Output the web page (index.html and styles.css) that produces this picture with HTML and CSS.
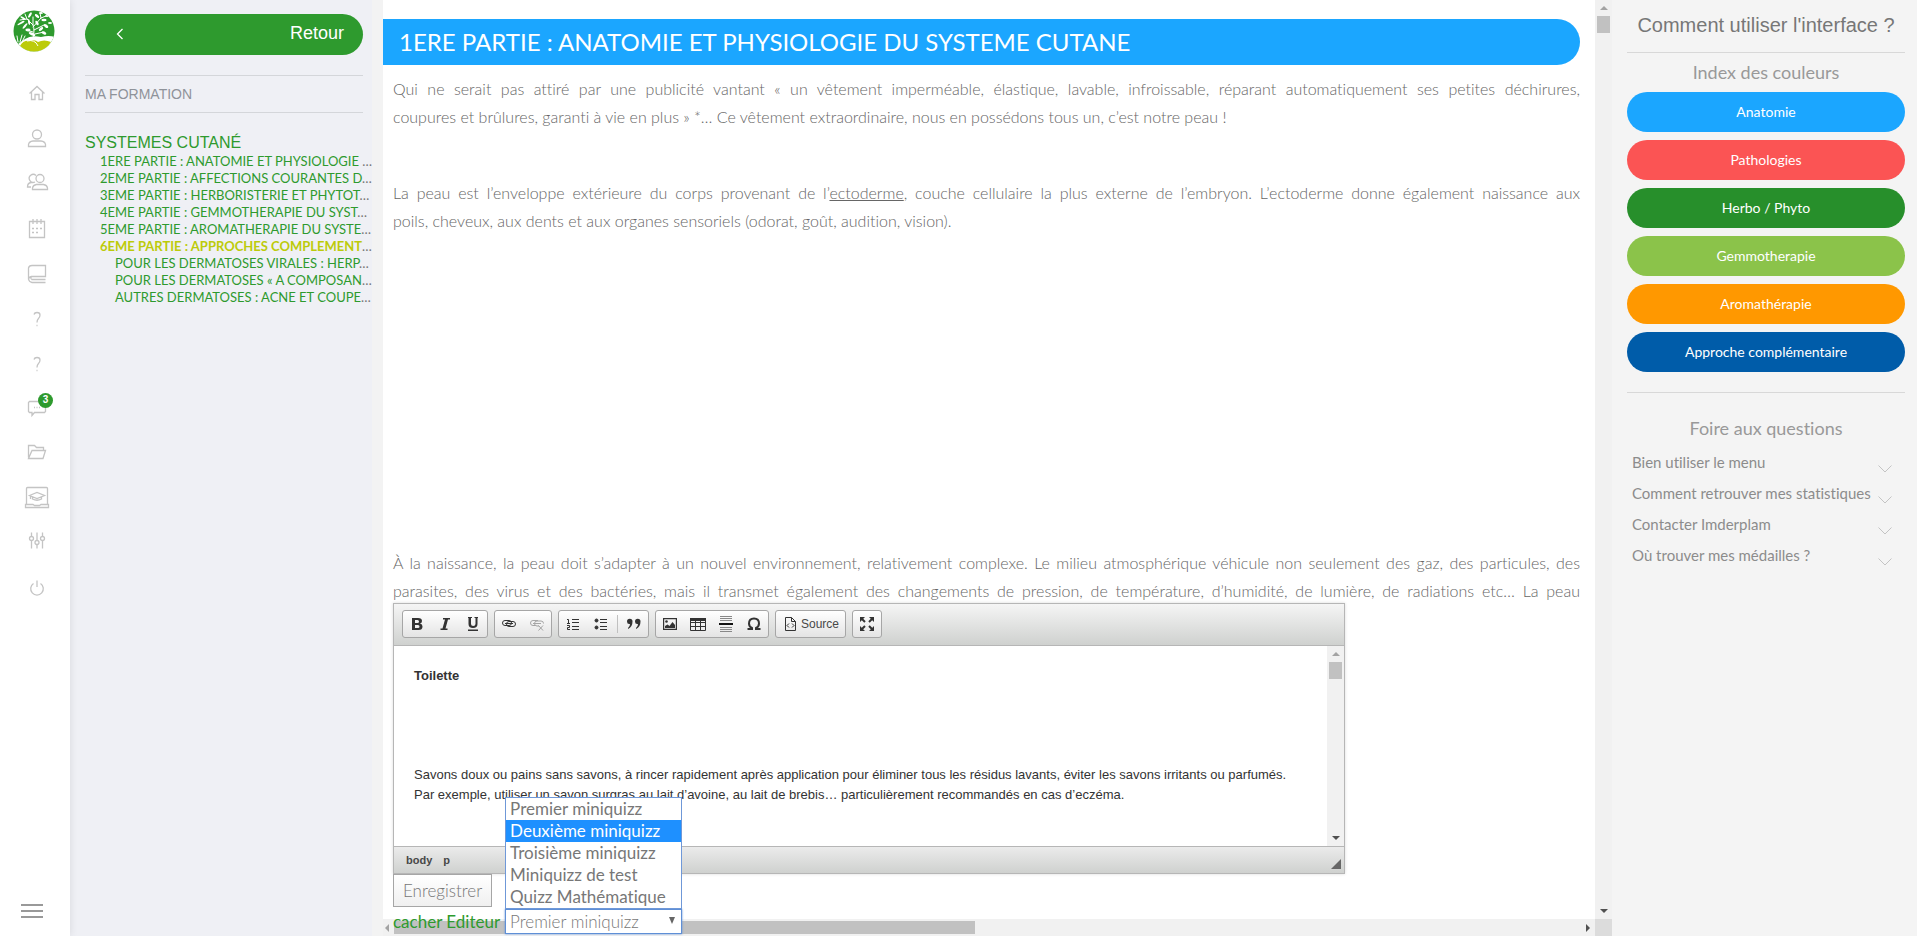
FILE: index.html
```html
<!DOCTYPE html>
<html lang="fr">
<head>
<meta charset="utf-8">
<title>Ma formation – Systèmes cutané</title>
<link rel="stylesheet" href="styles.css">
</head>
<body>
<nav class="rail" aria-label="Navigation principale">
  <a class="logo" href="#" aria-label="Accueil">
    <svg width="42" height="42" viewBox="0 0 42 42">
      <clipPath id="disc"><circle cx="21" cy="21" r="20.5"/></clipPath>
      <g clip-path="url(#disc)">
        <rect width="42" height="42" fill="#2e9a2e"/>
        <path d="M5 34L12 29Q18 25 28 27Q36 25 42 27V42H0Z" fill="#fff"/>
        <path d="M7 36Q10 30 17 31Q22 29 25 32Q31 29 38 32Q33 42 21 42Q12 42 7 36Z" fill="#bccb0a"/>
        <path d="M14 31Q22 29 25 36" stroke="#fff" fill="none"/>
        <g stroke="#fff" fill="none" stroke-width="1" stroke-linecap="round">
          <path d="M20 28Q22 20 20 15L14 9M20 17L28 8M21 20L31 15M20 22L13 20M28 8L27 3M28 8L33 6M14 9L12 4M14 9L7 10M22 24L31 22M20 15L20 7M7 32L9 25M9 32L12 26M5 32L4 26"/>
        </g>
        <g fill="#fff">
          <ellipse cx="24" cy="6" rx="2.600" ry="1.300" transform="rotate(40 24 6)"/><ellipse cx="31" cy="10" rx="2.600" ry="1.300"/><ellipse cx="33" cy="16" rx="2.600" ry="1.400" transform="rotate(35 33 16)"/><ellipse cx="28" cy="19" rx="2.600" ry="1.400" transform="rotate(-40 28 19)"/><ellipse cx="31" cy="23" rx="2.500" ry="1.300" transform="rotate(25 31 23)"/><ellipse cx="24" cy="13" rx="2.500" ry="1.300" transform="rotate(60 24 13)"/><ellipse cx="16" cy="12" rx="3" ry="1" transform="rotate(80 16 12)"/><ellipse cx="10" cy="8" rx="3" ry="1" transform="rotate(30 10 8)"/><ellipse cx="8" cy="13" rx="4" ry="1" transform="rotate(-30 8 13)"/><ellipse cx="12" cy="16" rx="3.500" ry="1" transform="rotate(-50 12 16)"/><ellipse cx="17" cy="5" rx="3" ry="1.200" transform="rotate(-60 17 5)"/><ellipse cx="15" cy="20" rx="2.500" ry="1.400"/><ellipse cx="19" cy="24" rx="3.500" ry="1.400" transform="rotate(25 19 24)"/><ellipse cx="28" cy="3" rx="2" ry="1"/><ellipse cx="34" cy="6" rx="2" ry="1"/><ellipse cx="37" cy="13" rx="2" ry="1"/>
        </g>
      </g>
    </svg>
  </a>
  <ul class="rail-list">
    <li><a href="#" aria-label="Accueil"><svg class="ico" viewBox="0 0 26 26"><path d="M5.500 13.500L13 6.500L20.500 13.500M7.500 12V19.500H11V14.500H15V19.500H18.500V12"/></svg></a></li>
    <li><a href="#" aria-label="Profil"><svg class="ico" viewBox="0 0 26 26"><circle cx="13" cy="9.500" r="4.500"/><path d="M4.500 21.500V19.500Q5 16.500 9 16H17Q21 16.500 21.500 19.500V21.500Z"/></svg></a></li>
    <li><a href="#" aria-label="Groupes"><svg class="ico" viewBox="0 0 26 26"><circle cx="16" cy="8.500" r="4"/><path d="M8.500 19.500V18Q9 15 12.500 14.500H19.500Q23 15 23.500 18V19.500ZM12 5.500A4 4 0 1 0 11 12M10 12.500H7Q3.500 13 3.500 17H7"/></svg></a></li>
    <li><a href="#" aria-label="Agenda"><svg class="ico" viewBox="0 0 26 26"><path d="M5.500 6.500H20.500V22.500H5.500ZM9 4V9M13 4V9M17 4V9"/><path d="M8 13.500H18M8 17.500H15" stroke-dasharray="2 2"/></svg></a></li>
    <li><a href="#" aria-label="Cours"><svg class="ico" viewBox="0 0 26 26"><path d="M8 5.500H21.500V16.500H7.500Q4.500 17 4.500 19.500V8Q5 5.500 8 5.500M4.500 19Q5 22 8 22.500H21.500M7.500 19.500H21.500M7.500 16.500Q6 18.500 8 19.500"/></svg></a></li>
    <li><a href="#" aria-label="Aide"><svg class="ico" viewBox="0 0 26 26"><path d="M10 9.500Q10.500 7.500 13 7.500Q16 7.500 16 10Q16 12 14.500 13.500Q13 15 13 17.500M12.500 20.500H13.500"/></svg></a></li>
    <li><a href="#" aria-label="Quizz"><svg class="ico" viewBox="0 0 26 26"><path d="M10 9.500Q10.500 7.500 13 7.500Q16 7.500 16 10Q16 12 14.500 13.500Q13 15 13 17.500M12.500 20.500H13.500"/></svg></a></li>
    <li><a href="#" aria-label="Messages"><svg class="ico" viewBox="0 0 26 26"><path d="M5.500 6.500H20.500L21.500 7.500V16.500L20.500 17.500H10.500L8 20.500V17.500H5.500L4.500 16.500V7.500Z"/><path d="M10 12.500H17" stroke-dasharray="1 1.500"/></svg><span class="badge">3</span></a></li>
    <li><a href="#" aria-label="Documents"><svg class="ico" viewBox="0 0 26 26"><path d="M4.500 17.500V5.500H10.500L12.500 7.500H19.500V10.500M4.500 18.500L8 10.500H21.500L19 18.500Z"/></svg></a></li>
    <li><a href="#" aria-label="E-learning"><svg class="ico" viewBox="0 0 26 26"><path d="M2.500 19V3.500Q2.500 2.500 3.500 2.500H22.500Q23.500 2.500 23.500 3.500V19M1.500 19.500H9L10.500 20.500H15.500L17 19.500H24.500V22.500H1.500ZM5.500 10.500L13 7.500L20.500 10.500L13 13.500ZM8.500 12V14Q13 16.500 17.500 14V12M6.500 11V14"/></svg></a></li>
    <li><a href="#" aria-label="Réglages"><svg class="ico" viewBox="0 0 26 26"><path d="M7.500 2.500V6.500M7.500 10.500V18.500M13 2.500V10.500M13 14.500V18.500M18.500 2.500V6.500M18.500 10.500V18.500"/><circle cx="7.500" cy="8.500" r="2"/><circle cx="13" cy="12.500" r="2"/><circle cx="18.500" cy="8.500" r="2"/></svg></a></li>
    <li><a href="#" aria-label="Déconnexion"><svg class="ico" viewBox="0 0 26 26"><path d="M9.500 8.500A6.300 6.300 0 1 0 16.500 8.500M13 5.500V12"/></svg></a></li>
  </ul>
  <button class="burger" type="button" aria-label="Menu"><i></i><i></i><i></i></button>
</nav>

<aside class="sidebar">
  <button class="back" type="button">
    <svg width="8" height="12" viewBox="0 0 8 12"><path d="M6.500 1L1.500 6L6.500 11" fill="none" stroke="#fff" stroke-width="1.300"/></svg>
    <span>Retour</span>
  </button>
  <h2 class="side-title">MA FORMATION</h2>
  <h3 class="course"><a href="#">SYSTEMES CUTANÉ</a></h3>
  <ul class="toc">
    <li><a href="#">1ERE PARTIE : ANATOMIE ET PHYSIOLOGIE </a>…</li>
    <li><a href="#">2EME PARTIE : AFFECTIONS COURANTES D</a>…</li>
    <li><a href="#">3EME PARTIE : HERBORISTERIE ET PHYTOT</a>…</li>
    <li><a href="#">4EME PARTIE : GEMMOTHERAPIE DU SYST</a>…</li>
    <li><a href="#">5EME PARTIE : AROMATHERAPIE DU SYSTE</a>…</li>
    <li><a class="current" href="#">6EME PARTIE : APPROCHES COMPLEMENT</a>…</li>
    <li class="sub"><a href="#">POUR LES DERMATOSES VIRALES : HERP</a>…</li>
    <li class="sub"><a href="#">POUR LES DERMATOSES « A COMPOSAN</a>…</li>
    <li class="sub"><a href="#">AUTRES DERMATOSES : ACNE ET COUPE</a>…</li>
  </ul>
</aside>

<main class="main">
  <article class="lesson">
    <h1>1ERE PARTIE : ANATOMIE ET PHYSIOLOGIE DU SYSTEME CUTANE</h1>
    <p><span class="full">Qui ne serait pas attiré par une publicité vantant « un vêtement imperméable, élastique, lavable, infroissable, réparant automatiquement ses petites déchirures, </span>coupures et brûlures, garanti à vie en plus » *… Ce vêtement extraordinaire, nous en possédons tous un, c’est notre peau !</p>
    <p><span class="full">La peau est l’enveloppe extérieure du corps provenant de l’<u>ectoderme</u>, couche cellulaire la plus externe de l’embryon. L’ectoderme donne également naissance aux </span>poils, cheveux, aux dents et aux organes sensoriels (odorat, goût, audition, vision).</p>
    <p class="after-media"><span class="full">À la naissance, la peau doit s’adapter à un nouvel environnement, relativement complexe. Le milieu atmosphérique véhicule non seulement des gaz, des particules, des </span><span class="full">parasites, des virus et des bactéries, mais il transmet également des changements de pression, de température, d’humidité, de lumière, de radiations etc… La peau</span></p>
  </article>
  <div class="vbar"><i class="tri up"></i><i class="vthumb"></i><i class="tri down"></i></div>
  <div class="hbar"><i class="tri left"></i><i class="hthumb"></i><i class="tri right"></i></div>
  <div class="corner"></div>

  <form class="dock">
    <div class="editor">
      <div class="toolbar" role="toolbar">
        <div class="group">
          <button type="button" aria-label="Gras"><svg class="tool" viewBox="0 0 16 16"><path fill-rule="evenodd" d="M3 2H9Q13 2 13 5Q13 7 11 7.600Q13.500 8.200 13.500 10.500Q13.500 14 9.500 14H3ZM6 4V7H8.500Q10 7 10 5.500T8.500 4ZM6 9V12H9Q10.500 12 10.500 10.500T9 9Z"/></svg></button>
          <button type="button" aria-label="Italique"><svg class="tool" viewBox="0 0 16 16"><path d="M6 2H13V3.500H11L8.500 12.500H10.500V14H3.500V12.500H5.500L8 3.500H6Z"/></svg></button>
          <button type="button" aria-label="Souligné"><svg class="tool" viewBox="0 0 16 16"><path d="M3 1H7V2H6V8Q6 10 8.200 10T10.500 8V2H9.500V1H13V2H12.500V8Q12.500 12 8 12T3.500 8V2H3ZM3 13.500H13V15H3Z"/></svg></button>
        </div>
        <div class="group">
          <button type="button" aria-label="Lien"><svg class="tool line" viewBox="0 0 16 16"><rect x="1.500" y="4.500" width="9" height="5" rx="2.500"/><rect x="5.500" y="5.500" width="9" height="5" rx="2.500"/><path d="M4 7.500H12"/></svg></button>
          <button type="button" aria-label="Supprimer le lien" disabled><svg class="tool line" viewBox="0 0 16 16"><path d="M10 10H8Q5.500 10 5.500 7.500T8 5H12Q14.500 5 14.500 7.500M6 9.500H4Q1.500 9.500 1.500 7T4 4.500H9M4 7.500H12M9.500 9.500L14 14.500M14 9.500L9.500 14.500"/></svg></button>
        </div>
        <div class="group">
          <button type="button" aria-label="Liste numérotée"><svg class="tool line" viewBox="0 0 16 16"><path d="M2 3.500H3.500V7M2 7.500H5M2 9.500H4.500V11.500H2.500V13.500H5M7 3.500H14M7 6.500H14M7 10.500H14M7 13.500H14"/></svg></button>
          <button type="button" aria-label="Liste à puces"><svg class="tool line" viewBox="0 0 16 16"><circle cx="3.500" cy="4.500" r="1.500" fill="#333"/><circle cx="3.500" cy="11.500" r="1.500" fill="#333"/><path d="M7 3.500H14M7 6.500H14M7 10.500H14M7 13.500H14"/></svg></button>
          <span class="sep"></span>
          <button type="button" aria-label="Citation"><svg class="tool" viewBox="0 0 16 16"><path d="M1 5.500A2.500 2.500 0 0 1 6.500 5.500Q6.500 11 2 13V12Q4 10.500 4 8Q1 8.500 1 5.500ZM9 5.500A2.500 2.500 0 0 1 14.500 5.500Q14.500 11 10 13V12Q12 10.500 12 8Q9 8.500 9 5.500Z"/></svg></button>
        </div>
        <div class="group">
          <button type="button" aria-label="Image"><svg class="tool" viewBox="0 0 16 16"><path fill-rule="evenodd" d="M1 2H15V14H1ZM2.200 3.200V12.800H13.800V3.200Z"/><circle cx="4.500" cy="5.500" r="1.300"/><path d="M3 12V10L5.500 8.500L7.500 10L10.500 6L13 9V12Z"/></svg></button>
          <button type="button" aria-label="Tableau"><svg class="tool line" viewBox="0 0 16 16"><path d="M.5 2.500H15.500V14.500H.5ZM.5 6.500H15.500M.5 10.500H15.500M5.500 5V14M10.500 5V14"/><path d="M0 3.500H16" stroke-width="3"/></svg></button>
          <button type="button" aria-label="Ligne horizontale"><svg class="tool line" viewBox="0 0 16 16"><path d="M2 .5H14M2 2.500H14M2 4.500H14M2 11.500H14M2 13.500H14M2 15.500H14" stroke="#888"/><path d="M1 8H15" stroke-width="2" stroke="#111"/></svg></button>
          <button type="button" aria-label="Caractère spécial"><svg class="tool line" viewBox="0 0 16 16"><path d="M1.500 13H6V12Q3 10.500 3 7.500Q3 2.500 8 2.500T13 7.500Q13 10.500 10 12V13H14.500" stroke-width="2"/></svg></button>
        </div>
        <div class="group">
          <button class="source" type="button"><svg class="tool line" viewBox="0 0 16 16"><path d="M3.500 1.500H9.500L13.500 5.500V14.500H3.500ZM9.500 1.500V5.500H13.500M7 7.500L5 9.500L7 11.500M10 7.500L12 9.500L10 11.500"/></svg>Source</button>
        </div>
        <div class="group">
          <button type="button" aria-label="Agrandir"><svg class="tool line" viewBox="0 0 16 16"><path d="M2 2L6 6M14 2L10 6M2 14L6 10M14 14L10 10" stroke-width="2"/><path d="M1 1H6L1 6ZM15 1H10L15 6ZM1 15H6L1 10ZM15 15H10L15 10Z" fill="#333" stroke="none"/></svg></button>
        </div>
      </div>
      <div class="edit-area">
        <div class="edit-text" contenteditable="true" role="textbox" aria-label="Contenu">
          <p><strong>Toilette</strong></p>
          <p><br></p>
          <p><br></p>
          <p>Savons doux ou pains sans savons, à rincer rapidement après application pour éliminer tous les résidus lavants, éviter les savons irritants ou parfumés.<br>Par exemple, utiliser un savon surgras au lait d’avoine, au lait de brebis… particulièrement recommandés en cas d’eczéma.</p>
        </div>
        <div class="vbar"><i class="tri up"></i><i class="vthumb"></i><i class="tri down"></i></div>
      </div>
      <div class="path"><a href="#">body</a><a href="#">p</a><i class="grip"></i></div>
    </div>
    <button class="save" type="button">Enregistrer</button>
    <div class="quiz-row">
      <a href="#">cacher Editeur</a>
      <div class="combo">
        <select aria-label="Miniquizz"><option>Premier miniquizz</option></select>
        <ul class="options">
          <li>Premier miniquizz</li>
          <li class="active">Deuxième miniquizz</li>
          <li>Troisième miniquizz</li>
          <li>Miniquizz de test</li>
          <li>Quizz Mathématique</li>
        </ul>
      </div>
    </div>
  </form>
</main>

<aside class="help">
  <h2>Comment utiliser l'interface ?</h2>
  <section class="legend">
    <h3>Index des couleurs</h3>
    <a class="pill anatomy" href="#">Anatomie</a>
    <a class="pill patho" href="#">Pathologies</a>
    <a class="pill herbo" href="#">Herbo / Phyto</a>
    <a class="pill gemmo" href="#">Gemmotherapie</a>
    <a class="pill aroma" href="#">Aromathérapie</a>
    <a class="pill compl" href="#">Approche complémentaire</a>
  </section>
  <section class="faq">
    <h3>Foire aux questions</h3>
    <button type="button">Bien utiliser le menu<svg class="chev" viewBox="0 0 14 8"><path d="M.5 .5L7 7L13.500 .5"/></svg></button>
    <button type="button">Comment retrouver mes statistiques<svg class="chev" viewBox="0 0 14 8"><path d="M.5 .5L7 7L13.500 .5"/></svg></button>
    <button type="button">Contacter Imderplam<svg class="chev" viewBox="0 0 14 8"><path d="M.5 .5L7 7L13.500 .5"/></svg></button>
    <button type="button">Où trouver mes médailles ?<svg class="chev" viewBox="0 0 14 8"><path d="M.5 .5L7 7L13.500 .5"/></svg></button>
  </section>
</aside>
</body>
</html>
```
FILE: styles.css
```css
* { box-sizing: border-box; }
body {
  margin: 0;
  height: 100vh;
  display: flex;
  overflow: hidden;
  background: #f3f3f3;
  color: #777;
  font-family: Lato, sans-serif;
  font-variant-ligatures: none;
}
h1, h2, h3, p, ul { margin: 0; padding: 0; font-weight: 400; }
ul { list-style: none; }
a { color: inherit; text-decoration: none; }
button { font-family: inherit; font-variant-ligatures: none; color: inherit; border: 0; background: none; padding: 0; }
i { display: block; }

/* icon rail */
.rail {
  flex: 0 0 70px;
  display: flex;
  flex-direction: column;
  background: #fff;
  box-shadow: 0 0 8px rgba(0, 0, 0, .1);
  z-index: 1;
}
.logo { height: 70px; padding: 10px 0 0 13px; }
.rail-list a {
  position: relative;
  display: flex;
  height: 45px;
  align-items: center;
  padding-left: 24px;
}
.ico { width: 26px; height: 26px; fill: none; stroke: #c4c4c4; stroke-width: 1.3; }
.badge {
  position: absolute;
  left: 38px;
  top: 8px;
  width: 15px;
  height: 15px;
  border-radius: 50%;
  background: #2e9a2e;
  color: #fff;
  font: bold 10px/14px "Liberation Sans", sans-serif;
  text-align: center;
}
.burger {
  margin: auto 0 18px 21px;
  width: 22px;
  display: grid;
  gap: 4px;
}
.burger i { height: 2px; background: #999; }

/* course sidebar */
.sidebar {
  flex: 0 0 302px;
  min-width: 0;
  margin-right: 11px;
  padding: 14px 9px 0 15px;
  background: #eff0f5;
  font-family: "Liberation Sans", Arial, sans-serif;
}
.back {
  display: flex;
  align-items: center;
  justify-content: space-between;
  width: 100%;
  height: 41px;
  padding: 0 19px 2px 31px;
  border-radius: 21px;
  background: #2e9a2e;
  color: #fff;
  font-size: 18px;
}
.side-title {
  margin-top: 20px;
  border: solid #d4d6da;
  border-width: 1px 0;
  font-size: 14px;
  line-height: 36px;
  color: #8f939a;
}
.course { margin-top: 20px; font-size: 16px; line-height: 20px; color: #2e9a2e; }
.toc {
  padding-left: 15px;
  font-family: Lato, sans-serif;
  font-size: 13px;
  line-height: 17px;
  white-space: nowrap;
}
.toc a { color: #2e9a2e; white-space: pre; }
.toc .current { color: #bccb0a; font-weight: 700; }
.toc .sub { padding-left: 15px; }

/* lesson */
.main {
  position: relative;
  flex: 1;
  min-width: 0;
  display: grid;
  grid-template: 1fr 17px / 1fr 17px;
  background: #fff;
}
.lesson { padding: 19px 15px 0 0; overflow: hidden; min-height: 0; }
.lesson h1 {
  padding-left: 16px;
  border-radius: 0 23px 23px 0;
  background: #1ba6ff;
  color: #fff;
  font-size: 24px;
  line-height: 46px;
}
.lesson p {
  margin: 10px 0 48px 10px;
  font-size: 16px;
  font-weight: 300;
  line-height: 28px;
  color: #666;
  text-align: justify;
}
.lesson p + p { margin-top: 0; }
.lesson .after-media { padding-top: 266px; }
.full { display: block; text-align-last: justify; }

/* scrollbars */
.vbar, .hbar { display: flex; align-items: center; background: #f1f1f1; }
.vbar { flex-direction: column; padding: 6px 0; }
.vthumb { width: 13px; height: 17px; margin: 6px 0 auto; background: #c1c1c1; }
.hbar { padding: 0 5px 0 2px; }
.hthumb { width: 581px; height: 13px; margin: 0 auto 0 5px; background: #c1c1c1; }
.tri { border: 4px solid transparent; }
.up { border-top: 0; border-bottom-color: #a3a3a3; }
.down { border-bottom: 0; border-top-color: #505050; }
.left { border-left: 0; border-right-color: #a3a3a3; }
.right { border-right: 0; border-left-color: #505050; }
.corner { background: #dcdcdc; }

/* editor docked over the lesson */
.dock { position: absolute; left: 10px; bottom: 2px; width: 952px; }
.editor {
  border: 1px solid #b6b6b6;
  background: #fff;
  box-shadow: 0 0 3px rgba(0, 0, 0, .15);
  font-family: "Liberation Sans", Arial, sans-serif;
  color: #333;
}
.toolbar {
  display: flex;
  gap: 6px;
  padding: 6px 8px 7px;
  border-bottom: 1px solid #b6b6b6;
  background: linear-gradient(#f5f5f5, #cfd1cf);
}
.group {
  display: flex;
  align-items: center;
  height: 28px;
  border: 1px solid #a6a6a6;
  border-radius: 3px;
  background: linear-gradient(#fff, #e4e4e4);
}
.group button { display: flex; align-items: center; height: 26px; padding: 0 6px; }
.group .source { gap: 3px; font-size: 12px; padding: 0 6px; color: #484848; }
.group button:disabled { opacity: .4; }
.tool { width: 16px; height: 16px; fill: #333; }
.line { fill: none; stroke: #333; }
.sep { width: 1px; height: 18px; margin: 0 2px; background: #c0c0c0; }
.edit-area { display: flex; height: 200px; }
.edit-text { flex: 1; padding: 20px; font-size: 13px; line-height: 20px; }
.edit-text p + p { margin-top: 13px; }
.edit-area .vbar { width: 17px; }
.path {
  display: flex;
  align-items: center;
  gap: 11px;
  height: 27px;
  padding: 0 3px 0 12px;
  border-top: 1px solid #b6b6b6;
  background: linear-gradient(#ebebeb, #cfd1cf);
  font-size: 11px;
  font-weight: 700;
  color: #484848;
}
.grip {
  margin: 8px 0 0 auto;
  border: 5px solid transparent;
  border-right-color: #666;
  border-bottom-color: #666;
}
.save {
  display: block;
  height: 33px;
  padding: 0 9px;
  border: 1px solid #a6a6a6;
  background: linear-gradient(#fff, #f0f0f0);
  font-size: 17px;
  font-weight: 300;
}
.quiz-row { display: flex; align-items: center; gap: 5px; height: 27px; padding-top: 2px; font-size: 17px; }
.quiz-row > a { color: #2e9a2e; }
.combo { position: relative; width: 177px; }
.combo select {
  display: block;
  width: 100%;
  height: 25px;
  padding: 0 0 0 4px;
  border: 1px solid #5f8fd6;
  box-shadow: 0 0 2px #5f8fd6;
  background: #fff;
  color: #777;
  font: 300 17px Lato, sans-serif;
  appearance: none;
}
.combo::after {
  content: "";
  position: absolute;
  right: 7px;
  top: 8px;
  border: 3px solid transparent;
  border-top: 7px solid #666;
  border-bottom: 0;
}
.options {
  position: absolute;
  bottom: 100%;
  left: 0;
  right: 0;
  border: 1px solid #6f98d8;
  background: #fff;
}
.options li { padding-left: 4px; line-height: 22px; }
.options .active { background: #1e90ff; color: #fff; }

/* help panel */
.help { flex: 0 0 305px; padding: 0 12px 0 15px; background: #f4f4f4; text-align: center; }
.help h2 {
  height: 53px;
  border-bottom: 1px solid #d8d8d8;
  font: 20px/50px "Liberation Sans", Arial, sans-serif;
}
.help h3 { font-size: 18px; line-height: 24px; color: #999; }
.legend { padding: 7px 0 20px; border-bottom: 1px solid #d8d8d8; display: grid; gap: 8px; }
.pill { border-radius: 20px; color: #fff; font-size: 14px; line-height: 40px; }
.anatomy { background: #1ba6ff; }
.patho { background: #fb5454; }
.herbo { background: #278f2b; }
.gemmo { background: #8bc34a; }
.aroma { background: #ff9800; }
.compl { background: #005ca9; }
.faq { padding-top: 23px; }
.faq h3 { margin-bottom: 7px; }
.faq button {
  display: flex;
  width: 100%;
  justify-content: space-between;
  align-items: center;
  padding: 0 13px 0 5px;
  font-size: 15px;
  line-height: 31px;
  color: #8c8c8c;
}
.chev { width: 14px; height: 8px; margin-top: 12px; fill: none; stroke: #c4c4c4; }
```
